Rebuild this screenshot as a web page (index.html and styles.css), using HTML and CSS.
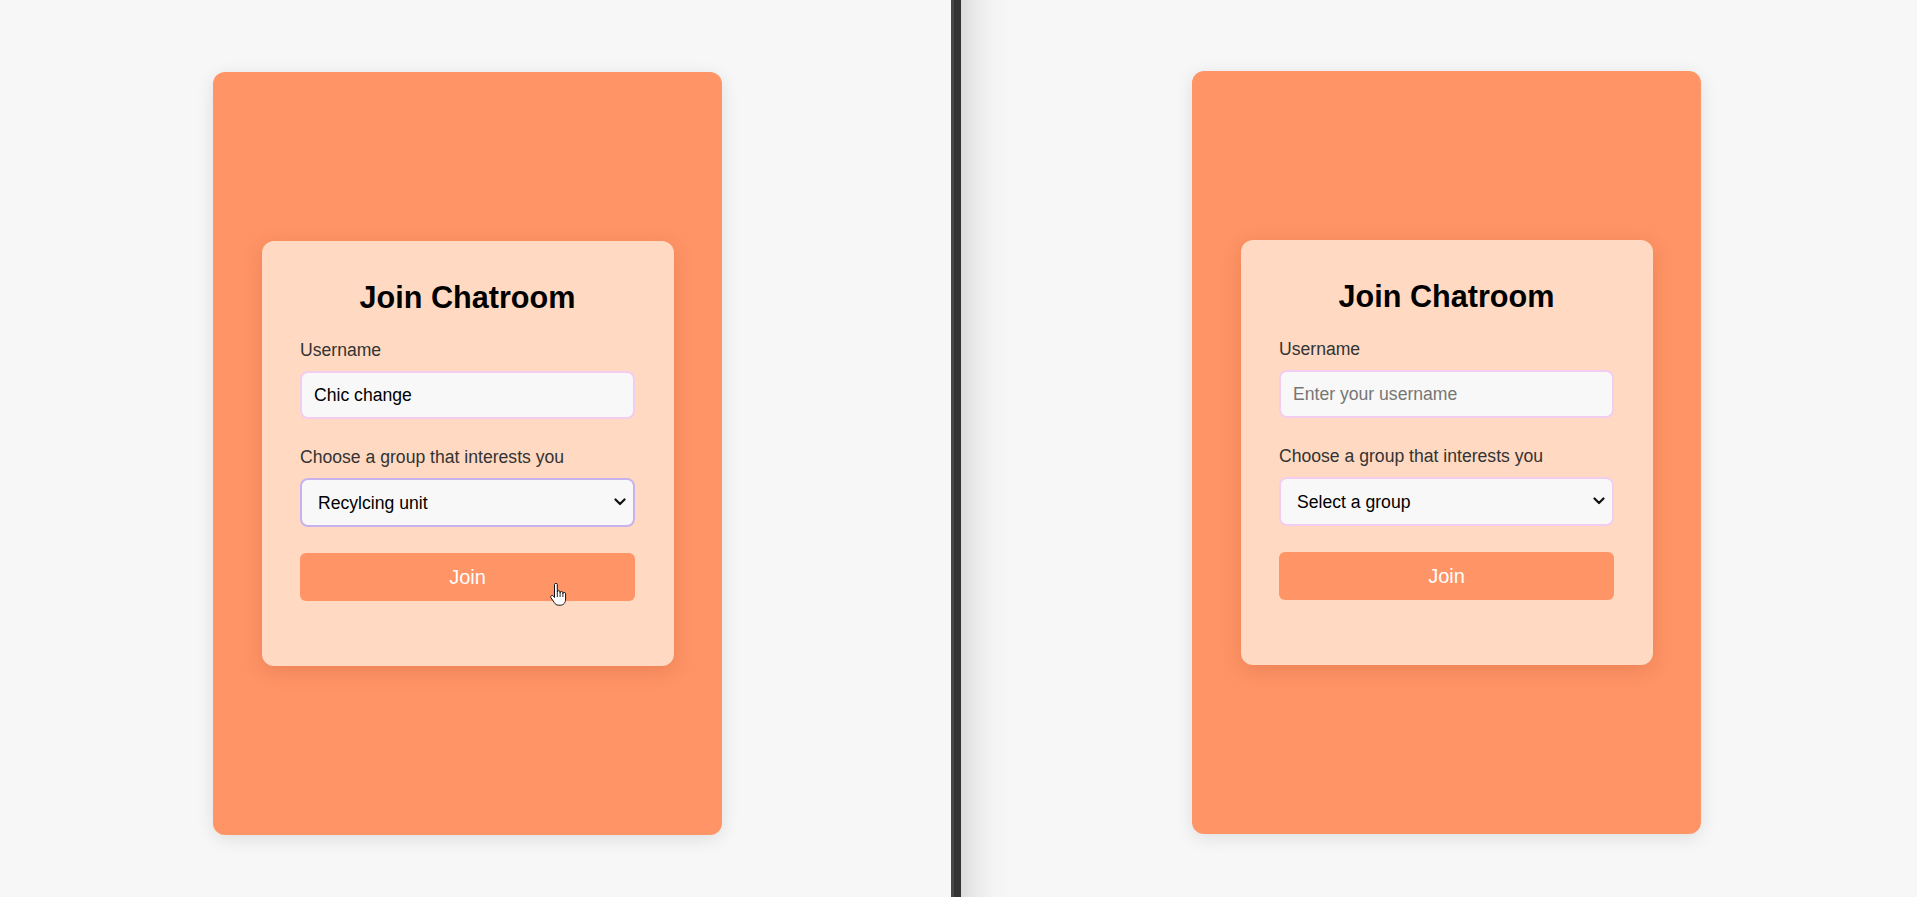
FILE: index.html
```html
<!DOCTYPE html>
<html lang="en">
<head>
<meta charset="utf-8">
<title>Join Chatroom</title>
<link rel="stylesheet" href="styles.css">
</head>
<body>
<div class="page">
  <section class="pane pane-left">
    <div class="panel">
      <form class="card">
        <h2 class="title">Join Chatroom</h2>
        <div class="group">
          <label class="label">Username</label>
          <input class="field" type="text" value="Chic change" placeholder="Enter your username">
        </div>
        <div class="group">
          <label class="label">Choose a group that interests you</label>
          <div class="select-wrap">
            <select class="field select select-focus">
              <option>Recylcing unit</option>
            </select>
            <svg class="chevron" viewBox="0 0 12 8" width="12" height="8"><path d="M1.5 1.5 L6 6 L10.5 1.5" fill="none" stroke="#111" stroke-width="2.2" stroke-linecap="round" stroke-linejoin="round"/></svg>
          </div>
        </div>
        <button class="btn" type="button">Join
          <svg class="cursor" viewBox="0 0 17 23" width="17" height="23"><path d="M4.5 1.6 C4.5 0.8 5.1 0.3 5.9 0.3 C6.7 0.3 7.3 0.8 7.3 1.6 V9 C7.3 8.2 7.9 7.7 8.7 7.7 C9.5 7.7 10.1 8.2 10.1 9 V9.8 C10.1 9 10.7 8.5 11.5 8.5 C12.3 8.5 12.9 9 12.9 9.8 V10.6 C12.9 9.8 13.5 9.4 14.2 9.4 C15 9.4 15.6 10 15.6 10.8 V16 C15.6 19.5 13.6 22.2 10.3 22.2 H8.6 C6.6 22.2 5.4 21.2 4.3 19.6 L1 14.8 C0.5 14.1 0.6 13.2 1.3 12.7 C2 12.2 3 12.4 3.5 13.1 L4.5 14.5 Z" fill="#fff" stroke="#111" stroke-width="1"/><path d="M7.3 9 V14 M10.1 9.6 V14 M12.9 10.4 V14" fill="none" stroke="#111" stroke-width="0.9"/></svg>
        </button>
      </form>
    </div>
  </section>
  <div class="divider"></div>
  <section class="pane pane-right">
    <div class="panel">
      <form class="card">
        <h2 class="title">Join Chatroom</h2>
        <div class="group">
          <label class="label">Username</label>
          <input class="field" type="text" placeholder="Enter your username">
        </div>
        <div class="group">
          <label class="label">Choose a group that interests you</label>
          <div class="select-wrap">
            <select class="field select">
              <option>Select a group</option>
            </select>
            <svg class="chevron" viewBox="0 0 12 8" width="12" height="8"><path d="M1.5 1.5 L6 6 L10.5 1.5" fill="none" stroke="#111" stroke-width="2.2" stroke-linecap="round" stroke-linejoin="round"/></svg>
          </div>
        </div>
        <button class="btn" type="button">Join</button>
      </form>
    </div>
  </section>
</div>
</body>
</html>
```

FILE: styles.css
```css
* { box-sizing: border-box; }

html, body {
  margin: 0;
  padding: 0;
  background: #f7f7f7;
  font-family: "Liberation Sans", Arial, sans-serif;
}

.page {
  display: flex;
  width: 1917px;
  height: 897px;
  overflow: hidden;
}

.pane {
  display: flex;
  justify-content: center;
  align-items: flex-start;
}

.pane-left {
  width: 951px;
  padding-right: 16px;
  padding-top: 72px;
}

.divider {
  width: 10px;
  flex: none;
  background: linear-gradient(to right, #474747 0, #474747 3px, #333 3px, #333 100%);
}

.pane-right {
  flex: 1;
  padding-left: 15px;
  padding-top: 71px;
  background: linear-gradient(to right, #dcdcdc 0, #ebebeb 16px, #f4f4f4 34px, #f7f7f7 50px);
}

.panel {
  width: 509px;
  height: 763px;
  background: #ff9466;
  border-radius: 12px;
  box-shadow: 0 4px 18px rgba(0, 0, 0, 0.1);
  display: flex;
  align-items: center;
  justify-content: center;
}

.card {
  width: 412px;
  background: #ffd9c2;
  border-radius: 12px;
  padding: 39px 38.5px 65px;
  box-shadow: 0 5px 20px rgba(120, 40, 0, 0.16);
}

.title {
  margin: 0 0 23.3px;
  font-size: 30.6px;
  font-weight: bold;
  text-align: center;
  color: #000;
  line-height: normal;
}

.group {
  margin-bottom: 26px;
}

.label {
  display: block;
  font-size: 17.6px;
  color: #333;
  padding-top: 2px;
  margin-bottom: 10px;
  line-height: normal;
}

.field {
  display: block;
  width: 100%;
  height: 48px;
  padding: 0 12px;
  border: 2px solid #f3cdf0;
  border-radius: 8px;
  background: #f8f8f8;
  font-family: "Liberation Sans", Arial, sans-serif;
  font-size: 17.6px;
  color: #000;
  outline: none;
}

.field::placeholder {
  color: #767676;
}

.select-wrap {
  position: relative;
}

.select {
  -webkit-appearance: none;
  appearance: none;
  height: 49px;
  padding-left: 16px;
}

.select-focus {
  border-color: #c8b2ee;
}

.chevron {
  position: absolute;
  right: 9px;
  top: 20px;
  pointer-events: none;
}

.btn {
  position: relative;
  display: block;
  width: 100%;
  height: 48px;
  border: none;
  border-radius: 6px;
  background: #ff9466;
  color: #fff;
  font-family: "Liberation Sans", Arial, sans-serif;
  font-size: 20px;
  cursor: pointer;
}

.cursor {
  position: absolute;
  left: 250px;
  top: 30px;
}
```
